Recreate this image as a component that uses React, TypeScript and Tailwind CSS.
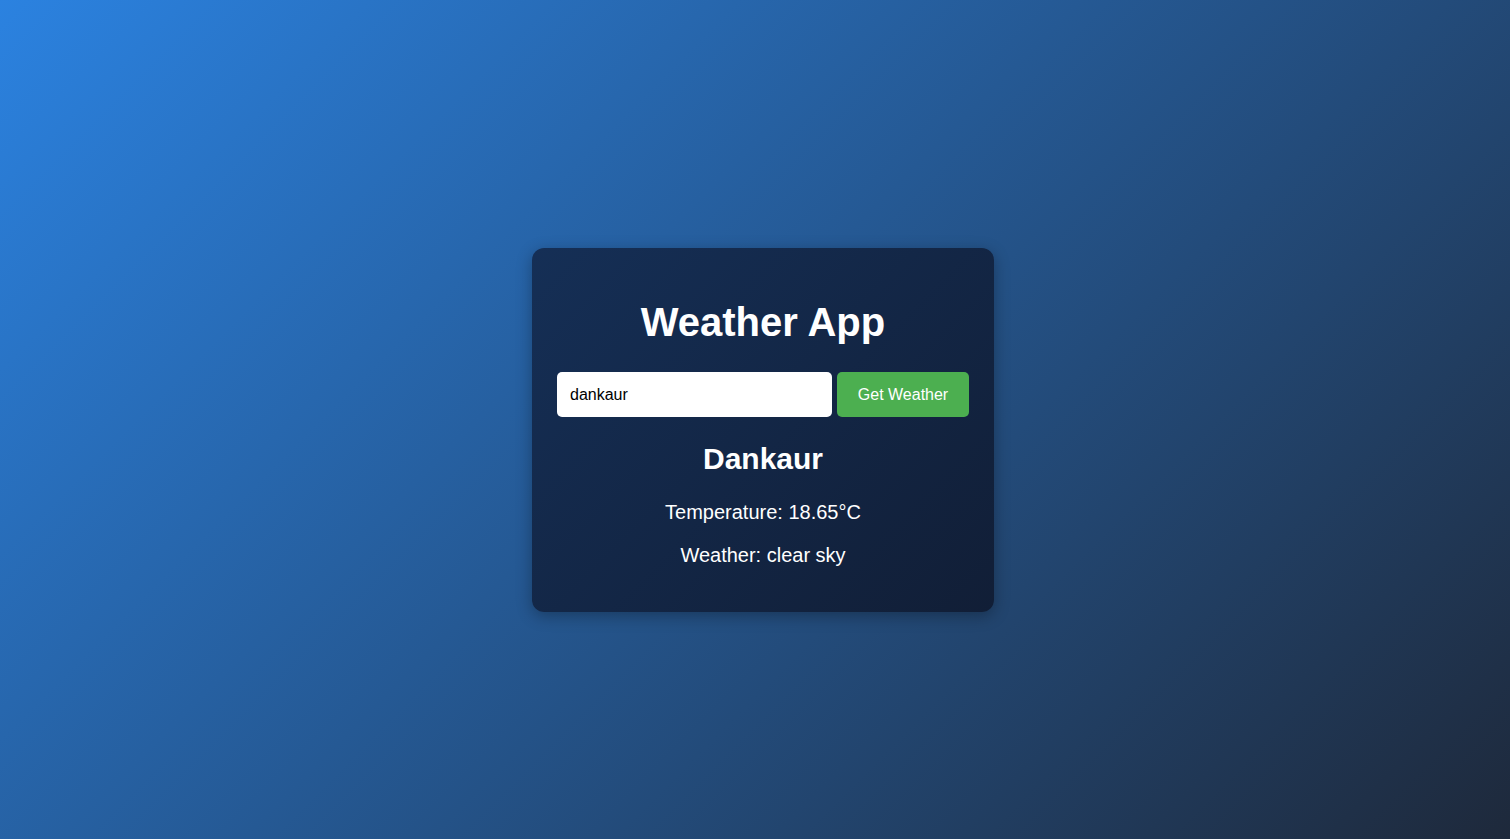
import React, { useState } from 'react';

export default function App() {
  const [city, setCity] = useState('dankaur');

  return (
    <div
      className="h-screen w-full flex items-center justify-center pt-[21px] pl-[16px] bg-[linear-gradient(135deg,#2b82e0_0%,#1e293b_100%)]"
      style={{ fontFamily: '"Liberation Sans", Arial, sans-serif' }}
    >
      <div className="w-[462px] px-[25px] pt-[25px] pb-[25px] rounded-[12px] text-white text-center text-[20px] bg-[linear-gradient(135deg,#152f56_0%,#111e36_100%)] shadow-[0_4px_16px_rgba(0,0,0,0.3)]">
        <h1 className="mt-[27px] mb-[27px] text-[40px] leading-[45px] font-bold">Weather App</h1>

        {/* Search row */}
        <div className="flex gap-[5px]">
          <input
            value={city}
            onChange={(e) => setCity(e.target.value)}
            className="w-[275px] h-[45px] px-[13px] rounded-[5px] bg-white text-black text-[16px] outline-none"
          />
          <button className="w-[132px] h-[45px] rounded-[5px] bg-[#4caf50] text-white text-[16px]">
            Get Weather
          </button>
        </div>

        {/* Result */}
        <h2 className="mt-[25px] text-[30px] leading-[34px] font-bold">Dankaur</h2>
        <p className="mt-[25px] leading-[23px]">Temperature: 18.65°C</p>
        <p className="mt-[20px] mb-[20px] leading-[23px]">Weather: clear sky</p>
      </div>
    </div>
  );
}
